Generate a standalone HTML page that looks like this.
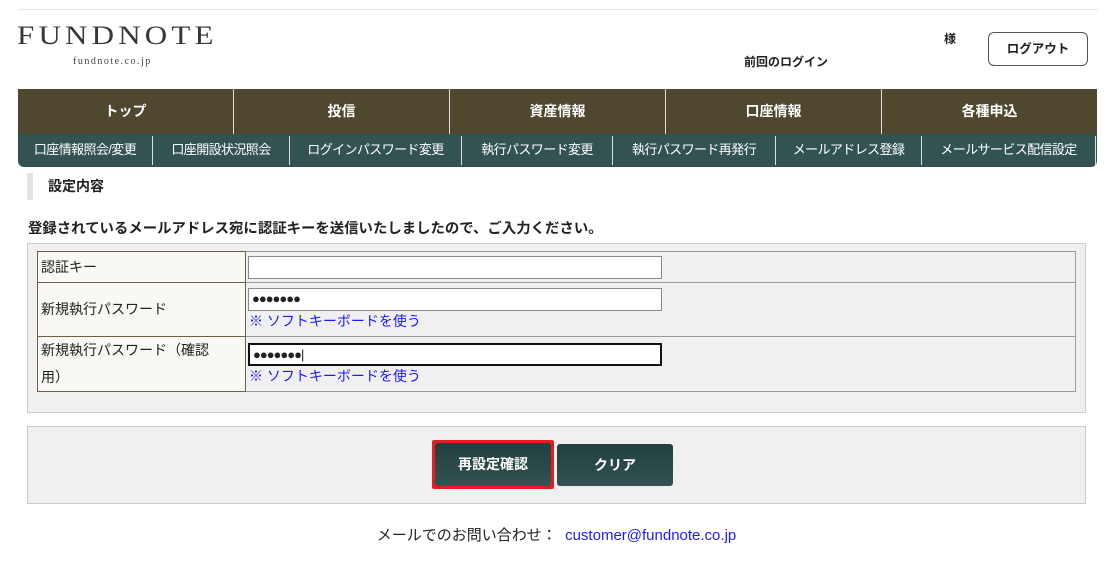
<!DOCTYPE html>
<html><head><meta charset="utf-8"><style>
*{box-sizing:border-box;margin:0;padding:0}
body{width:1107px;height:565px;background:#fff;font-family:"Liberation Sans","Noto Sans CJK JP",sans-serif;color:#222;position:relative;overflow:hidden}
.abs{position:absolute}
.nav1{left:18px;top:89px;width:1079px;height:45px;background:#4f482e;display:flex}
.nav1 div{flex:1;color:#fff;font-weight:bold;font-size:14px;text-align:center;line-height:45px;border-left:1px solid #ddd}
.nav1 div:first-child{border-left:none}
.nav2{left:18px;top:134px;width:1079px;height:33px;background:#335353;border-radius:0 0 6px 6px;display:flex}
.nav2 span{height:29px;margin-top:2px;line-height:27px;color:#fff;font-size:13px;letter-spacing:-0.6px;white-space:nowrap;text-align:center;border-right:1px solid #ddd}
.box{left:27px;width:1059px;background:#f0f0f0;border:1px solid #ccc}
table{position:absolute;left:37px;top:251px;width:1039px;border-collapse:collapse;font-size:14px}
td{border:1px solid #999;vertical-align:middle}
td.l{background:#f9f8f5;border-color:#6b5f47;width:208px;padding:0 3px;line-height:27px}
.inp{display:block;width:414px;height:23px;border:1px solid #888;background:#fff;margin-left:2px;font-size:13px;line-height:20px;padding-left:3px;letter-spacing:-1px}
a{color:#1a1aff;text-decoration:none;font-size:14px;margin-left:3px}
.btn{background:linear-gradient(#213f3e,#325352);color:#fff;font-weight:bold;font-size:14px;text-align:center;border-radius:3px}
</style></head><body>
<div class="abs" style="left:18px;top:9px;width:1080px;height:1px;background:#e5e5e5"></div>
<div class="abs" style="left:17px;top:20px;font-family:'Liberation Serif',serif;font-size:31px;letter-spacing:4.2px;color:#3b3535;transform:scaleY(0.85);transform-origin:top">FUNDNOTE</div>
<div class="abs" style="left:73px;top:56px;font-family:'Liberation Serif',serif;font-size:10px;letter-spacing:1.5px;color:#444">fundnote.co.jp</div>
<div class="abs" style="left:944px;top:30px;font-size:12px;font-weight:bold">様</div>
<div class="abs" style="left:744px;top:53px;font-size:12px;font-weight:bold">前回のログイン</div>
<div class="abs" style="left:988px;top:32px;width:100px;height:34px;border:1px solid #555;border-radius:6px;text-align:center;line-height:32px;font-size:12.5px;font-weight:bold">ログアウト</div>
<div class="abs nav1"><div>トップ</div><div>投信</div><div>資産情報</div><div>口座情報</div><div>各種申込</div></div>
<div class="abs nav2">
<span style="width:135px">口座情報照会/変更</span>
<span style="width:137px">口座開設状況照会</span>
<span style="width:172px">ログインパスワード変更</span>
<span style="width:151px">執行パスワード変更</span>
<span style="width:163px">執行パスワード再発行</span>
<span style="width:146px">メールアドレス登録</span>
<span style="width:174px">メールサービス配信設定</span>
</div>
<div class="abs" style="left:27px;top:173px;width:6px;height:27px;background:#e3e3e3"></div>
<div class="abs" style="left:48px;top:176px;font-size:14px;font-weight:bold">設定内容</div>
<div class="abs" style="left:28px;top:217px;font-size:14.4px;font-weight:bold">登録されているメールアドレス宛に認証キーを送信いたしましたので、ご入力ください。</div>
<div class="abs box" style="top:243px;height:170px"></div>
<table>
<tr style="height:31px"><td class="l">認証キー</td><td><span class="inp"></span></td></tr>
<tr style="height:54px"><td class="l">新規執行パスワード</td><td><span class="inp">●●●●●●●</span><a>※ ソフトキーボードを使う</a></td></tr>
<tr style="height:55px"><td class="l">新規執行パスワード（確認<br>用）</td><td><span class="inp" style="border:2px solid #111">●●●●●●●|</span><a>※ ソフトキーボードを使う</a></td></tr>
</table>
<div class="abs box" style="top:426px;height:78px"></div>
<div class="abs" style="left:432px;top:440px;width:122px;height:49px;background:#e41e20;border-radius:2px"></div>
<div class="abs btn" style="left:435px;top:443px;width:116px;height:43px;line-height:43px">再設定確認</div>
<div class="abs btn" style="left:557px;top:444px;width:116px;height:42px;line-height:42px">クリア</div>
<div class="abs" style="left:0;width:1107px;top:524px;text-align:center;font-size:15px;padding-left:6px">メールでのお問い合わせ：&nbsp; <span style="color:#1a1aff">customer@fundnote.co.jp</span></div>
</body></html>
